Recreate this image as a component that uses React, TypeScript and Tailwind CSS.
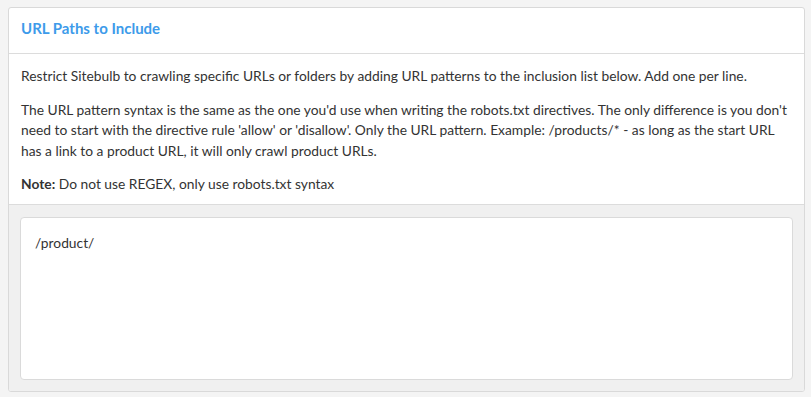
export default function App() {
  return (
    <div className="min-h-screen bg-[#f4f4f4] px-2 pt-[7px] pb-[5px] font-['Lato','Open_Sans',sans-serif] text-[#333]">
      <div className="w-[797px] overflow-hidden rounded-[3px] border border-[#d9d9d9] bg-white">
        {/* header */}
        <div className="h-[46px] border-b border-[#dcdcdc] px-3 pt-[9px]">
          <h2 className="text-[15px] font-bold text-[#3d9bea]">URL Paths to Include</h2>
        </div>

        {/* description */}
        <div className="space-y-[13px] px-3 pt-[12px] pb-[9px] text-[13.8px] leading-[20.5px]">
          <p>
            Restrict Sitebulb to crawling specific URLs or folders by adding URL patterns to the inclusion list below. Add one per line.
          </p>
          <p>
            The URL pattern syntax is the same as the one you'd use when writing the robots.txt directives. The only difference is you
            don't need to start with the directive rule 'allow' or 'disallow'. Only the URL pattern. Example: /products/* - as long as the
            start URL has a link to a product URL, it will only crawl product URLs.
          </p>
          <p>
            <strong className="font-bold">Note:</strong> Do not use REGEX, only use robots.txt syntax
          </p>
        </div>

        {/* input */}
        <div className="border-t border-[#dcdcdc] bg-[#f0f0f0] px-[11px] pt-3 pb-[11px]">
          <textarea
            className="block h-[163px] w-full resize-none rounded-[4px] border border-[#dadada] bg-white px-[14px] pt-[15px] text-[13.8px] text-[#333] outline-none"
            defaultValue="/product/"
          />
        </div>
      </div>
    </div>
  )
}
